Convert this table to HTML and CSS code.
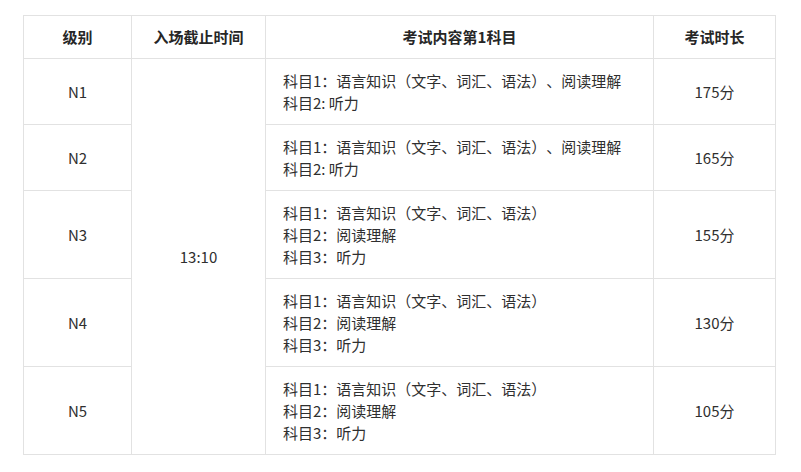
FILE: index.html
```html
<!DOCTYPE html>
<html lang="zh-CN">
<head>
<meta charset="utf-8">
<link rel="stylesheet" href="styles.css">
</head>
<body>
<table class="exam">
  <colgroup>
    <col class="c-level">
    <col class="c-time">
    <col class="c-content">
    <col class="c-dur">
  </colgroup>
  <thead>
    <tr>
      <th>级别</th>
      <th>入场截止时间</th>
      <th>考试内容第1科目</th>
      <th>考试时长</th>
    </tr>
  </thead>
  <tbody>
    <tr>
      <td class="center">N1</td>
      <td class="center" rowspan="5">13:10</td>
      <td class="content">科目1：语言知识（文字、词汇、语法）、阅读理解<br>科目2: 听力</td>
      <td class="center">175分</td>
    </tr>
    <tr>
      <td class="center">N2</td>
      <td class="content">科目1：语言知识（文字、词汇、语法）、阅读理解<br>科目2: 听力</td>
      <td class="center">165分</td>
    </tr>
    <tr>
      <td class="center">N3</td>
      <td class="content">科目1：语言知识（文字、词汇、语法）<br>科目2：阅读理解<br>科目3：听力</td>
      <td class="center">155分</td>
    </tr>
    <tr>
      <td class="center">N4</td>
      <td class="content">科目1：语言知识（文字、词汇、语法）<br>科目2：阅读理解<br>科目3：听力</td>
      <td class="center">130分</td>
    </tr>
    <tr>
      <td class="center">N5</td>
      <td class="content">科目1：语言知识（文字、词汇、语法）<br>科目2：阅读理解<br>科目3：听力</td>
      <td class="center">105分</td>
    </tr>
  </tbody>
</table>
</body>
</html>
```
FILE: styles.css
```css
html, body {
  margin: 0;
  padding: 0;
  background: #ffffff;
}
body {
  padding: 15px 0 0 23px;
  font-family: "Noto Sans CJK SC", "Noto Sans", sans-serif;
  color: #2f2f2f;
  text-spacing-trim: space-all;
}
.exam {
  border-collapse: collapse;
  table-layout: fixed;
  width: 752px;
}
.c-level { width: 108px; }
.c-time { width: 134px; }
.c-content { width: 388px; }
.c-dur { width: 122px; }
.exam th,
.exam td {
  border: 1px solid #e2e2e2;
  font-size: 15px;
  line-height: 22px;
  padding: 10px 0;
}
.exam th {
  font-weight: bold;
  text-align: center;
  color: #262626;
}
.exam td {
  padding: 10.5px 0;
}
.center {
  text-align: center;
}
.content {
  text-align: left;
  padding-left: 17px !important;
  text-spacing-trim: space-all;
}
```
